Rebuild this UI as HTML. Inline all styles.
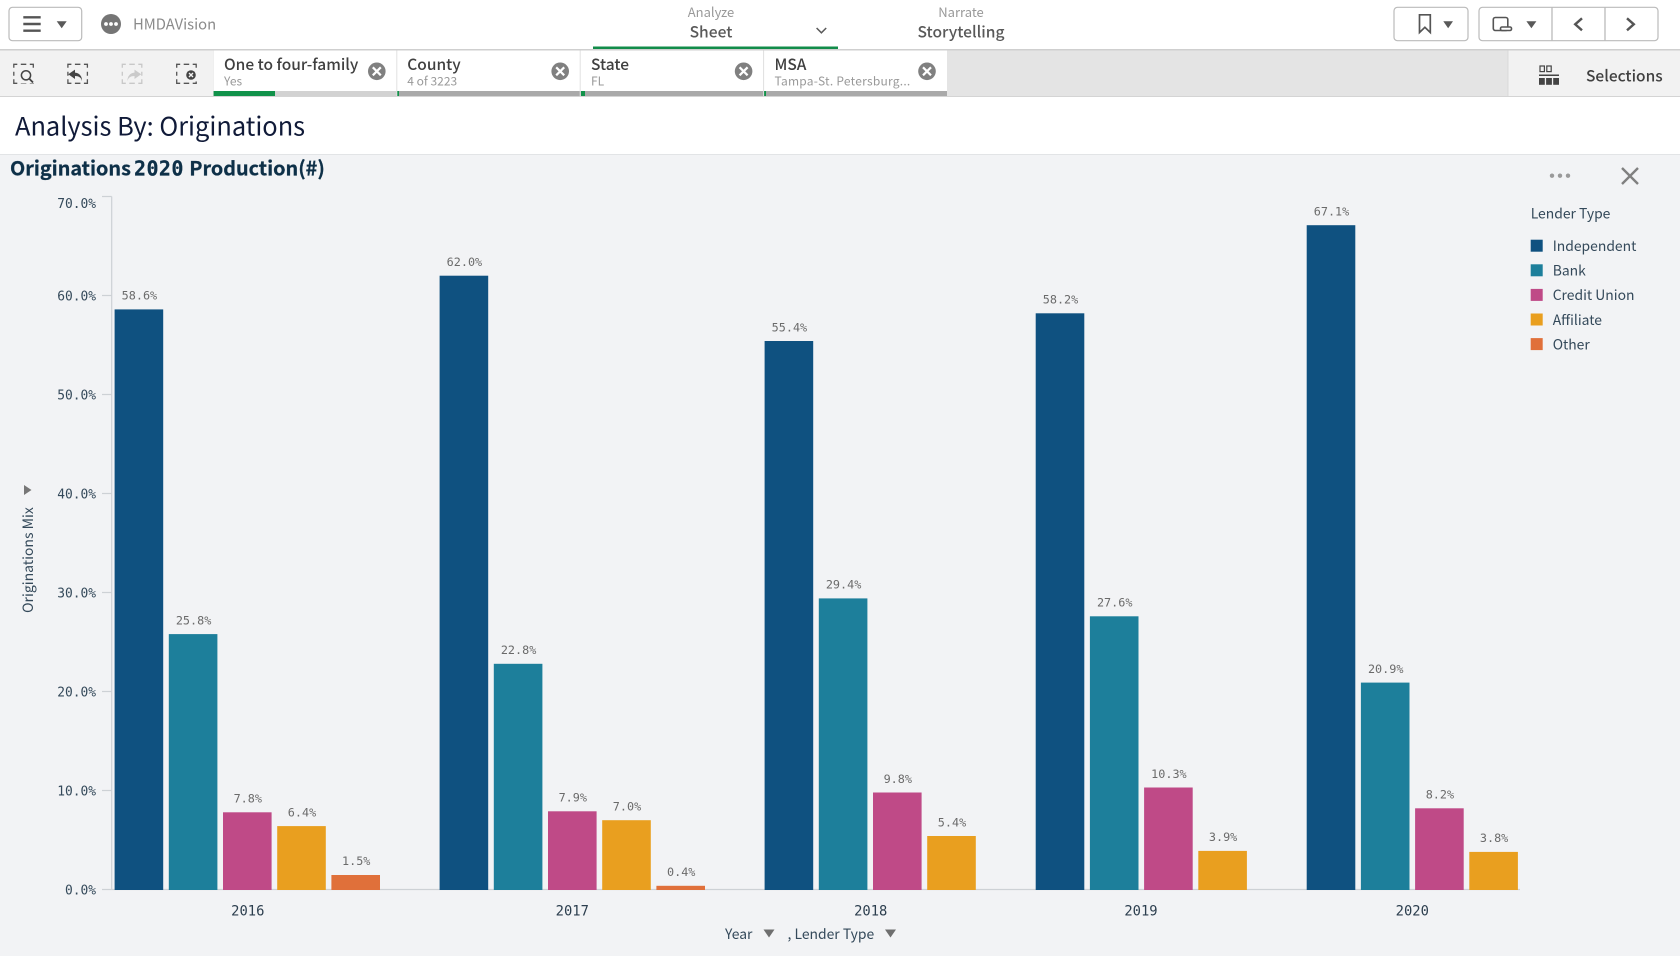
<!DOCTYPE html>
<html lang="en"><head><meta charset="utf-8"><title>HMDAVision</title>
<style>
html,body{margin:0;padding:0;width:1680px;height:956px;overflow:hidden;background:#f2f3f5}
svg{display:block}
text{font-family:"Noto Sans CJK JP","Liberation Sans",sans-serif}
.m,.lb text,.ax text,.yr text{font-family:"DejaVu Sans Mono","Liberation Mono",monospace}
.lb text{font-size:11.8px;fill:#6a6a6a;text-anchor:middle}
.ax text{font-size:12.9px;fill:#34495a;text-anchor:end}
.yr text{font-size:13.8px;fill:#2c3e4e;text-anchor:middle}
.tt{font-size:15.5px;font-weight:500;fill:#404040}
.ts{font-size:12px;fill:#999}
.lg text{font-size:13.9px;fill:#34495a}
</style></head><body>
<svg width="1680" height="956" viewBox="0 0 1680 956" xmlns="http://www.w3.org/2000/svg">
<rect width="1680" height="956" fill="#f2f3f5"/>
<!-- top bar -->
<rect width="1680" height="49" fill="#fff"/>
<rect x="9" y="7.3" width="72.700" height="33.400" rx="3.500" fill="#fff" stroke="#bbb" stroke-width="1.200"/>
<path d="M23.300 17.300h17.400M23.300 24h17.400M23.300 30.700h17.400" stroke="#555" stroke-width="2.400"/>
<path d="M56.700 21.300h10l-5 6.900z" fill="#595959"/>
<circle cx="111" cy="24" r="10" fill="#757575"/>
<circle cx="106" cy="24" r="1.900" fill="#fff"/><circle cx="111" cy="24" r="1.900" fill="#fff"/><circle cx="116" cy="24" r="1.900" fill="#fff"/>
<text x="133" y="29.500" font-size="14.800" fill="#8a8a8a">HMDAVision</text>
<text x="711" y="17" font-size="13" fill="#999" text-anchor="middle">Analyze</text>
<text x="711" y="37.700" font-size="15.600" font-weight="500" fill="#595959" text-anchor="middle">Sheet</text>
<path d="M816.600 28l4.800 4.800 4.800-4.800" fill="none" stroke="#595959" stroke-width="1.500"/>
<rect x="593" y="46.500" width="245" height="3" fill="#128c4a"/>
<text x="961" y="17" font-size="13" fill="#999" text-anchor="middle">Narrate</text>
<text x="961" y="37.700" font-size="15.600" font-weight="500" fill="#595959" text-anchor="middle">Storytelling</text>
<rect x="1394" y="7.300" width="74" height="33.400" rx="3.500" fill="#fff" stroke="#bbb" stroke-width="1.200"/>
<path d="M1419.500 14.800h10.800v17.700l-5.400-5.200-5.400 5.200z" fill="none" stroke="#555" stroke-width="1.700"/>
<path d="M1443.300 21.300h9.700l-4.850 7z" fill="#595959"/>
<rect x="1479" y="7.300" width="179" height="33.400" rx="3.500" fill="#fff" stroke="#bbb" stroke-width="1.200"/>
<path d="M1552 7.500v33M1605 7.500v33" stroke="#bbb" stroke-width="1.300"/>
<rect x="1493.300" y="17.500" width="14.500" height="13" rx="2" fill="#fff" stroke="#555" stroke-width="1.600"/>
<rect x="1500.500" y="27" width="11" height="3.500" rx="1.500" fill="#fff" stroke="#555" stroke-width="1.600"/>
<path d="M1526.400 21.300h10l-5 7z" fill="#595959"/>
<path d="M1582 18.300l-6.800 6 6.800 6" fill="none" stroke="#555" stroke-width="2.400"/>
<path d="M1627 18.300l6.800 6-6.800 6" fill="none" stroke="#555" stroke-width="2.400"/>
<!-- toolbar -->
<rect y="49" width="1680" height="48" fill="#e4e4e4"/>
<rect y="49" width="1680" height="1.500" fill="#cfcfcf"/>
<rect y="50.500" width="213" height="46" fill="#f2f2f2"/>
<rect x="1508" y="50.500" width="172" height="46" fill="#f2f2f2"/>
<rect x="1507.500" y="50.500" width="1" height="46" fill="#d9d9d9"/>
<rect y="96" width="1680" height="1" fill="#d4d4d4"/>
<g fill="none" stroke="#555" stroke-width="1.300">
<path transform="translate(13.800 64.300)" d="M0 3.500V0H3.500M7 0H12.500M16 0H19.500V3.500M19.500 7.500V11.500M19.500 15V19H16M12.500 19H7M3.500 19H0V15M0 11.500V7.500"/>
<path transform="translate(67.900 64.300)" d="M0 3.500V0H3.500M7 0H12.500M16 0H19.500V3.500M19.500 7.500V11.500M19.500 15V19H16M12.500 19H7M3.500 19H0V15M0 11.500V7.500"/>
<path transform="translate(122.300 64.300)" stroke="#c8c8c8" d="M0 3.500V0H3.500M7 0H12.500M16 0H19.500V3.500M19.500 7.500V11.500M19.500 15V19H16M12.500 19H7M3.500 19H0V15M0 11.500V7.500"/>
<path transform="translate(176.700 64.300)" d="M0 3.500V0H3.500M7 0H12.500M16 0H19.500V3.500M19.500 7.500V11.500M19.500 15V19H16M12.500 19H7M3.500 19H0V15M0 11.500V7.500"/>
</g>
<rect x="20" y="69" width="14.500" height="14.500" fill="#f2f2f2"/>
<circle cx="26" cy="75.300" r="4.600" fill="none" stroke="#444" stroke-width="1.500"/><path d="M29.300 78.800l3.700 3.700" stroke="#444" stroke-width="1.800"/>
<path d="M82 81.200c-.5-3.700-3.500-5.200-7-5.200v3l-6.700-4.700 6.700-4.700v3c4.300.3 7.300 3.700 7 8.600z" fill="#444"/>
<path d="M127.500 81.200c.5-3.700 3.500-5.200 7-5.200v3l6.700-4.700-6.700-4.700v3c-4.300.3-7.300 3.700-7 8.600z" fill="#cacaca"/>
<rect x="184.500" y="68.500" width="12.500" height="13" fill="#f2f2f2"/>
<circle cx="191" cy="75" r="4.800" fill="#444"/><path d="M189 73l4 4M193 73l-4 4" stroke="#f2f2f2" stroke-width="1.400"/>
<!-- tabs -->
<g fill="#fff">
<rect x="213.600" y="50.500" width="183" height="40.500"/>
<rect x="397" y="50.500" width="183" height="40.500"/>
<rect x="580.400" y="50.500" width="183" height="40.500"/>
<rect x="763.800" y="50.500" width="183.200" height="40.500"/>
</g>
<rect x="213.600" y="91" width="183" height="5" fill="#d2d2d2"/>
<rect x="213.600" y="91" width="61.400" height="5" fill="#11924a"/>
<rect x="397" y="91" width="550" height="5" fill="#a9a9a9"/>
<rect x="397" y="91" width="2" height="5" fill="#11924a"/>
<rect x="581" y="91" width="4" height="5" fill="#11924a"/>
<rect x="764" y="91" width="2" height="5" fill="#11924a"/>
<path d="M396.800 50.500v46M580.200 50.500v46M763.600 50.500v46" stroke="#e0e0e0"/>
<text class="tt" x="224" y="70">One to four-family</text><text class="ts" x="224" y="85.500">Yes</text>
<text class="tt" x="407.300" y="70">County</text><text class="ts" x="407.300" y="85.500">4 of 3223</text>
<text class="tt" x="591" y="70">State</text><text class="ts" x="591" y="85.500">FL</text>
<text class="tt" x="774.500" y="70">MSA</text><text class="ts" x="774.500" y="85.500" letter-spacing=".24">Tampa-St. Petersburg...</text>
<g fill="#808080">
<circle cx="376.800" cy="71.300" r="8.800"/><circle cx="560.200" cy="71.300" r="8.800"/><circle cx="743.600" cy="71.300" r="8.800"/><circle cx="927" cy="71.300" r="8.800"/>
</g>
<path d="M372.800 67.300l8 8M380.800 67.300l-8 8M556.200 67.300l8 8M564.200 67.300l-8 8M739.600 67.300l8 8M747.600 67.300l-8 8M923 67.300l8 8M931 67.300l-8 8" stroke="#fff" stroke-width="2.200"/>
<rect x="1540" y="66" width="4.400" height="5.600" fill="none" stroke="#444" stroke-width="1.200"/><rect x="1546.800" y="66" width="4.400" height="5.600" fill="none" stroke="#444" stroke-width="1.200"/>
<rect x="1539" y="74.500" width="20" height="1.500" fill="#444"/>
<rect x="1539" y="78" width="5.800" height="6.800" fill="#444"/><rect x="1546.100" y="78" width="5.800" height="6.800" fill="#444"/><rect x="1553.200" y="78" width="5.800" height="6.800" fill="#444"/>
<text x="1586" y="81.300" font-size="15.500" font-weight="500" fill="#404040">Selections</text>
<!-- sheet title -->
<rect y="97" width="1680" height="57" fill="#fff"/>
<rect y="154" width="1680" height="1" fill="#e2e4e6"/>
<text x="15" y="135.500" font-size="25.400" fill="#101a38">Analysis By: Originations</text>
<g fill="#0e3048" stroke="#0e3048" stroke-width=".25">
<text x="10" y="175.300" font-size="19.800" font-weight="700">Originations</text>
<text class="m" x="134" y="175.300" font-size="20" font-weight="700" letter-spacing=".4">2020</text>
<text x="189.300" y="175.300" font-size="19.800" font-weight="700">Production(#)</text>
</g>
<g fill="#9a9a9a"><circle cx="1552" cy="175.700" r="2.200"/><circle cx="1560" cy="175.700" r="2.200"/><circle cx="1568" cy="175.700" r="2.200"/></g>
<path d="M1622 168l16 16M1638 168l-16 16" stroke="#808080" stroke-width="2.400"/>
<!-- axes -->
<path d="M111.700 196.500V890M102 196.500h9.700M102 295.500h9.700M102 394.500h9.700M102 493.500h9.700M102 592.500h9.700M102 691.500h9.700M102 790.500h9.700M102 889.500h9.700M111.700 889.500H1520" fill="none" stroke="#cdd1d5" stroke-width="1.200"/>
<g class="ax">
<text x="96" y="208">70.0%</text><text x="96" y="300.500">60.0%</text><text x="96" y="399.500">50.0%</text><text x="96" y="498.500">40.0%</text><text x="96" y="597.500">30.0%</text><text x="96" y="696.500">20.0%</text><text x="96" y="795.500">10.0%</text><text x="96" y="894.500">0.0%</text>
</g>
<path d="M24 485l7.500 5-7.500 5z" fill="#777"/>
<text transform="translate(33 560) rotate(-90)" font-size="14" fill="#34495a" text-anchor="middle">Originations Mix</text>
<!-- bars -->
<g fill="#0f5180">
<rect x="114.600" y="309.400" width="48.600" height="580.600"/><rect x="439.600" y="275.700" width="48.600" height="614.300"/><rect x="764.600" y="341" width="48.600" height="549"/><rect x="1035.700" y="313.300" width="48.600" height="576.700"/><rect x="1306.700" y="225.200" width="48.600" height="664.800"/>
</g>
<g fill="#1d7f9b">
<rect x="168.800" y="634.100" width="48.600" height="255.900"/><rect x="493.800" y="663.800" width="48.600" height="226.200"/><rect x="818.800" y="598.400" width="48.600" height="291.600"/><rect x="1089.900" y="616.300" width="48.600" height="273.700"/><rect x="1360.900" y="682.600" width="48.600" height="207.400"/>
</g>
<g fill="#bf4a87">
<rect x="223" y="812.300" width="48.600" height="77.700"/><rect x="548" y="811.300" width="48.600" height="78.700"/><rect x="873" y="792.500" width="48.600" height="97.500"/><rect x="1144.100" y="787.500" width="48.600" height="102.500"/><rect x="1415.100" y="808.300" width="48.600" height="81.700"/>
</g>
<g fill="#e99f1f">
<rect x="277.200" y="826.100" width="48.600" height="63.900"/><rect x="602.200" y="820.200" width="48.600" height="69.800"/><rect x="927.200" y="836" width="48.600" height="54"/><rect x="1198.300" y="850.900" width="48.600" height="39.100"/><rect x="1469.300" y="851.900" width="48.600" height="38.100"/>
</g>
<g fill="#e0703a">
<rect x="331.400" y="875" width="48.600" height="15"/><rect x="656.400" y="885.800" width="48.600" height="4.200"/>
</g>
<g class="lb">
<text x="139.400" y="299.700">58.6%</text><text x="193.600" y="624.400">25.8%</text><text x="247.800" y="802.600">7.8%</text><text x="302" y="816.400">6.4%</text><text x="356.200" y="864.900">1.5%</text>
<text x="464.400" y="266">62.0%</text><text x="518.600" y="654.100">22.8%</text><text x="572.800" y="801.600">7.9%</text><text x="627" y="810.500">7.0%</text><text x="681.200" y="875.800">0.4%</text>
<text x="789.400" y="331.300">55.4%</text><text x="843.600" y="588.700">29.4%</text><text x="897.800" y="782.800">9.8%</text><text x="952" y="826.300">5.4%</text>
<text x="1060.500" y="303.600">58.2%</text><text x="1114.700" y="606.600">27.6%</text><text x="1168.900" y="777.800">10.3%</text><text x="1223.100" y="841.200">3.9%</text>
<text x="1331.500" y="215.500">67.1%</text><text x="1385.700" y="672.900">20.9%</text><text x="1439.900" y="798.600">8.2%</text><text x="1494.100" y="842.200">3.8%</text>
</g>
<g class="yr">
<text x="247.800" y="915.500">2016</text><text x="572.300" y="915.500">2017</text><text x="870.700" y="915.500">2018</text><text x="1141" y="915.500">2019</text><text x="1412.300" y="915.500">2020</text>
</g>
<text x="725" y="939" font-size="13.900" fill="#34495a">Year</text>
<path d="M763.500 929.500h11l-5.500 8z" fill="#6f6f6f"/>
<text x="787.500" y="939" font-size="13.900" fill="#34495a">, Lender Type</text>
<path d="M885 929.500h11l-5.500 8z" fill="#6f6f6f"/>
<!-- legend -->
<g class="lg">
<text x="1530.700" y="218.500">Lender Type</text>
<rect x="1530.700" y="239.700" width="12" height="12" fill="#0f5180"/><text x="1552.700" y="251">Independent</text>
<rect x="1530.700" y="264.300" width="12" height="12" fill="#1d7f9b"/><text x="1552.700" y="275.600">Bank</text>
<rect x="1530.700" y="288.900" width="12" height="12" fill="#bf4a87"/><text x="1552.700" y="300.200">Credit Union</text>
<rect x="1530.700" y="313.500" width="12" height="12" fill="#e99f1f"/><text x="1552.700" y="324.800">Affiliate</text>
<rect x="1530.700" y="338.100" width="12" height="12" fill="#e0703a"/><text x="1552.700" y="349.400">Other</text>
</g>
</svg>
</body></html>
